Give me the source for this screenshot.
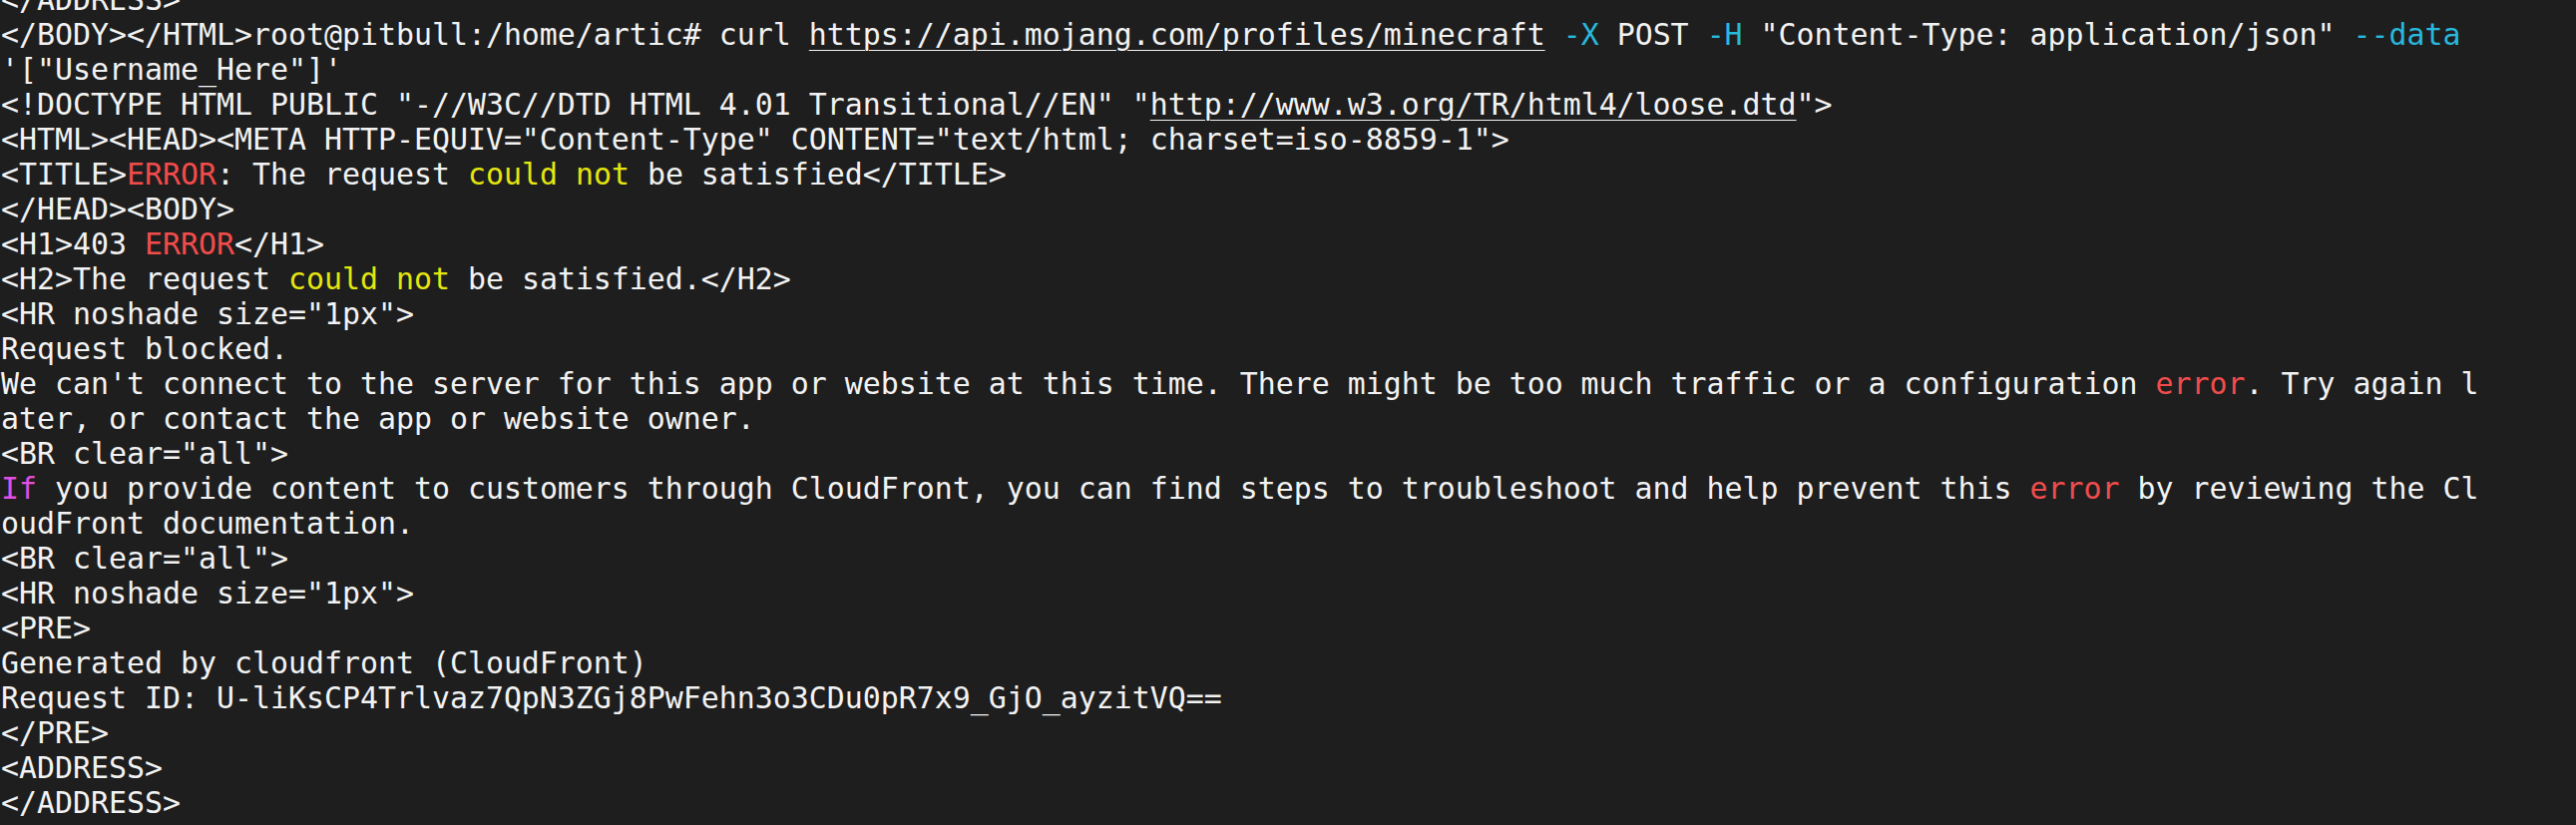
import React from "react";

type Seg = { t: string; c?: "r" | "y" | "c" | "m" | "u" };

const cls: Record<string, string> = {
  r: "text-[#f14c4c]",
  y: "text-[#e5e510]",
  c: "text-[#29b8db]",
  m: "text-[#e04fe0]",
  u: "underline decoration-1 underline-offset-[5px]",
};

const lines: Seg[][] = [
  [{ t: "</ADDRESS>" }],
  [
    { t: "</BODY></HTML>root@pitbull:/home/artic# curl " },
    { t: "https://api.mojang.com/profiles/minecraft", c: "u" },
    { t: " " },
    { t: "-X", c: "c" },
    { t: " POST " },
    { t: "-H", c: "c" },
    { t: ' "Content-Type: application/json" ' },
    { t: "--data", c: "c" },
  ],
  [{ t: "'[\"Username_Here\"]'" }],
  [
    { t: '<!DOCTYPE HTML PUBLIC "-//W3C//DTD HTML 4.01 Transitional//EN" "' },
    { t: "http://www.w3.org/TR/html4/loose.dtd", c: "u" },
    { t: '">' },
  ],
  [{ t: '<HTML><HEAD><META HTTP-EQUIV="Content-Type" CONTENT="text/html; charset=iso-8859-1">' }],
  [
    { t: "<TITLE>" },
    { t: "ERROR", c: "r" },
    { t: ": The request " },
    { t: "could not", c: "y" },
    { t: " be satisfied</TITLE>" },
  ],
  [{ t: "</HEAD><BODY>" }],
  [{ t: "<H1>403 " }, { t: "ERROR", c: "r" }, { t: "</H1>" }],
  [{ t: "<H2>The request " }, { t: "could not", c: "y" }, { t: " be satisfied.</H2>" }],
  [{ t: '<HR noshade size="1px">' }],
  [{ t: "Request blocked." }],
  [
    {
      t: "We can't connect to the server for this app or website at this time. There might be too much traffic or a configuration ",
    },
    { t: "error", c: "r" },
    { t: ". Try again l" },
  ],
  [{ t: "ater, or contact the app or website owner." }],
  [{ t: '<BR clear="all">' }],
  [
    { t: "If", c: "m" },
    {
      t: " you provide content to customers through CloudFront, you can find steps to troubleshoot and help prevent this ",
    },
    { t: "error", c: "r" },
    { t: " by reviewing the Cl" },
  ],
  [{ t: "oudFront documentation." }],
  [{ t: '<BR clear="all">' }],
  [{ t: '<HR noshade size="1px">' }],
  [{ t: "<PRE>" }],
  [{ t: "Generated by cloudfront (CloudFront)" }],
  [{ t: "Request ID: U-liKsCP4Trlvaz7QpN3ZGj8PwFehn3o3CDu0pR7x9_GjO_ayzitVQ==" }],
  [{ t: "</PRE>" }],
  [{ t: "<ADDRESS>" }],
  [{ t: "</ADDRESS>" }],
  [{ t: "</BODY></HTML>root@pitbull:/home/artic# " }],
];

export default function App() {
  return (
    <div className="w-[2582px] h-[827px] overflow-hidden bg-[#1e1e1e]">
      <div
        className="-mt-[18px] pl-[1px] text-[#f2f2f2] text-[29.9px] leading-[35px]"
        style={{ fontFamily: '"DejaVu Sans Mono", "Liberation Mono", monospace' }}
      >
        {lines.map((segs, i) => (
          <div key={i} className="h-[35px] whitespace-pre">
            {segs.map((s, j) =>
              s.c ? (
                <span key={j} className={cls[s.c]}>
                  {s.t}
                </span>
              ) : (
                <span key={j}>{s.t}</span>
              )
            )}
          </div>
        ))}
      </div>
    </div>
  );
}
